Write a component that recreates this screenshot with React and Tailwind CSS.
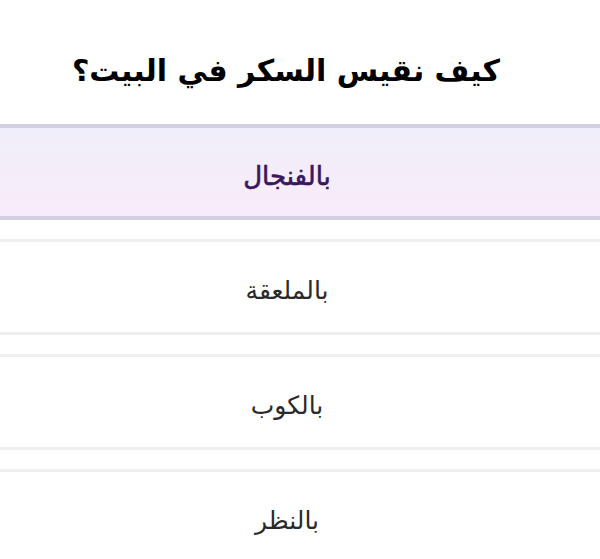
export default function App() {
  const options = ["بالملعقة", "بالكوب", "بالنظر"];
  return (
    <div
      dir="rtl"
      className="w-[600px] h-[559px] overflow-hidden bg-white"
      style={{ fontFamily: '"DejaVu Sans", "Noto Sans", sans-serif' }}
    >
      <div className="h-[124px] flex items-center justify-center pr-[28px] pt-[16px]">
        <h1 className="text-[30px] font-bold text-black">كيف نقيس السكر في البيت؟</h1>
      </div>
      <div className="flex flex-col gap-[19px]">
        <div className="h-[96px] flex items-center justify-center pr-[26px] pt-[8px] border-y-4 border-[#d4cfe2] bg-gradient-to-b from-[#f0eefa] to-[#f8ecf8]">
          <span className="text-[26px] text-[#3a1660] [-webkit-text-stroke:0.6px_#3a1660]">بالفنجال</span>
        </div>
        {options.map((o) => (
          <div
            key={o}
            className="h-[96px] flex items-center justify-center pr-[26px] pt-[8px] border-y-[3px] border-[#efefef] bg-white"
          >
            <span className="text-[25px] text-[#2a2a2a]">{o}</span>
          </div>
        ))}
      </div>
    </div>
  );
}
